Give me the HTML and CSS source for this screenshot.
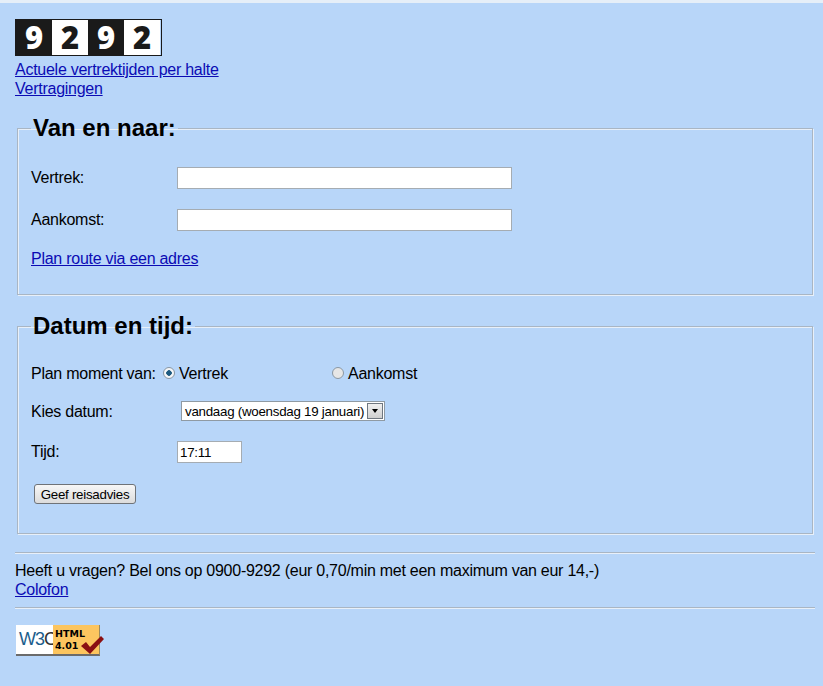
FILE: index.html
```html
<!DOCTYPE html>
<html lang="nl">
<head>
  <meta charset="UTF-8" />
  <title>9292 Reisadvies</title>
  <link rel="stylesheet" href="styles.css">
</head>
<body>
  <div id="logo">
    <span class="digit dark">9</span><span class="digit light">2</span><span class="digit dark">9</span><span class="digit light">2</span>
  </div>
  <a href="#">Actuele vertrektijden per halte</a><br>
  <a href="#">Vertragingen</a>

  <form>
    <fieldset class="first">
      <legend>Van en naar:</legend>
      <div class="row">
        <label for="from">Vertrek:</label>
        <input type="text" id="from" class="place">
      </div>
      <div class="row">
        <label for="to">Aankomst:</label>
        <input type="text" id="to" class="place">
      </div>
      <a href="#" class="via">Plan route via een adres</a>
    </fieldset>

    <fieldset class="second">
      <legend>Datum en tijd:</legend>
      <div class="row moment">
        <span class="moment-label">Plan moment van:</span>
        <label class="option first-option"><span class="radio checked"></span>Vertrek</label>
        <label class="option"><span class="radio"></span>Aankomst</label>
      </div>
      <div class="row date-row">
        <label>Kies datum:</label>
        <div class="select">
          <span class="select-text">vandaag (woensdag 19 januari)</span>
          <span class="select-btn"><span class="arrow"></span></span>
        </div>
      </div>
      <div class="row time-row">
        <label for="time">Tijd:</label>
        <input type="text" id="time" class="time" value="17:11">
      </div>
      <button type="button" class="btn">Geef reisadvies</button>
    </fieldset>
  </form>

  <hr class="rule-top">
  <div class="footer">
    Heeft u vragen? Bel ons op 0900-9292 (eur 0,70/min met een maximum van eur 14,-)<br>
    <a href="#">Colofon</a>
  </div>
  <hr class="rule-bottom">

  <div id="badge">
    <div class="badge-w3c"><span class="w3">W3</span><span class="c">C</span></div>
    <div class="badge-html">HTML<br>4.01</div>
    <svg class="check" width="24" height="20" viewBox="0 0 24 20">
      <path d="M1 11 L6 7 L10 12 L21 1 L24 4 L10 19 Z" fill="#8a0f12"/>
    </svg>
  </div>
</body>
</html>
```

FILE: styles.css
```css
html {
  background: #b8d6f9;
}

body {
  margin: 0;
  padding: 16px 8px 30px 15px;
  border-top: 3px solid #e6eff8;
  font-family: "Liberation Sans", Arial, sans-serif;
  font-size: 16px;
  letter-spacing: -0.26px;
  line-height: 19px;
  color: #000;
  min-height: 637px;
}

a {
  color: #0b0bb4;
}

#logo {
  display: flex;
  width: 147px;
  height: 37px;
  box-sizing: border-box;
  border: 1px solid #1a1a1a;
  margin-bottom: 4px;
  letter-spacing: 0;
}

.digit {
  width: 36px;
  height: 35px;
  text-align: center;
  font-family: "Open Sans", sans-serif;
  font-weight: 800;
  font-size: 31px;
  line-height: 35px;
}

.dark {
  background: #1a1a1a;
  color: #fff;
}

.light {
  background: #fff;
  color: #1a1a1a;
}

form {
  margin-top: 16px;
}

fieldset {
  margin: 0 2px;
  padding: 0 13px;
  border: 1px solid #a9b6c4;
  box-shadow: 1px 1px 0 #e8f0f9, inset 1px 1px 0 #e8f0f9;
  width: 796px;
  box-sizing: border-box;
}

legend {
  font-size: 24px;
  font-weight: bold;
  letter-spacing: 0;
  line-height: 28px;
  padding: 0 2px;
}

.first {
  height: 181px;
}

.second {
  height: 222px;
  margin-top: 17px;
}

.row {
  display: flex;
  align-items: center;
}

.row label {
  width: 146px;
}

.first .row {
  height: 22px;
  margin-top: 20px;
}

.first .row:first-of-type {
  margin-top: 25px;
}

.first .row label {
  margin-top: -2px;
}

.place {
  width: 335px;
  height: 22px;
  box-sizing: border-box;
  border: 1px solid #a5acb2;
  padding: 1px 3px;
  background: #fff;
}

.via {
  display: block;
  margin-top: 18px;
}

.moment {
  margin-top: 23px;
  height: 20px;
}

.moment-label {
  width: 132px;
}

.row .option {
  display: flex;
  align-items: center;
  width: auto;
}

.row .first-option {
  width: 169px;
}

.radio {
  width: 12px;
  height: 12px;
  box-sizing: border-box;
  border: 1px solid #8a97a3;
  border-radius: 50%;
  background: #e6e6e6;
  margin-right: 4px;
}

.checked {
  background: radial-gradient(circle, #1d5a80 0 2.5px, #f4f6f8 3px);
}

.date-row {
  margin-top: 18px;
  height: 20px;
}

.date-row label {
  width: 150px;
}

.select {
  display: flex;
  align-items: center;
  width: 204px;
  height: 20px;
  box-sizing: border-box;
  border: 1px solid #8f9aa3;
  background: #fff;
  font-size: 13.33px;
}

.select-text {
  flex: 1;
  padding-left: 3px;
  white-space: nowrap;
}

.select-btn {
  display: flex;
  align-items: center;
  justify-content: center;
  width: 16px;
  height: 16px;
  margin-right: 1px;
  border: 1px solid #6f7780;
  box-sizing: border-box;
  background: linear-gradient(#f0f0f0, #cfcfcf);
}

.arrow {
  width: 0;
  height: 0;
  border-left: 3px solid transparent;
  border-right: 3px solid transparent;
  border-top: 4px solid #000;
}

.time-row {
  margin-top: 20px;
  height: 22px;
}

.time-row label {
  margin-top: -2px;
}

.time {
  width: 65px;
  height: 22px;
  box-sizing: border-box;
  border: 1px solid #a5acb2;
  padding: 1px 2px;
  background: #fff;
  font-family: "Liberation Sans", Arial, sans-serif;
  font-size: 13.33px;
  letter-spacing: -0.26px;
}

.btn {
  display: block;
  margin: 21px 0 0 3px;
  width: 102px;
  height: 20px;
  padding: 0;
  border: 1px solid #6f7378;
  border-radius: 3px;
  background: linear-gradient(#f7f7f7, #dcdcdc);
  font-family: "Liberation Sans", Arial, sans-serif;
  font-size: 13.33px;
  letter-spacing: -0.26px;
  color: #000;
}

hr {
  margin: 0;
  border: 0;
  height: 1px;
  background: #a9b6c4;
  border-bottom: 1px solid #e8f0f9;
}

.rule-top {
  margin-top: 18px;
}

.footer {
  margin-top: 7px;
}

.rule-bottom {
  margin-top: 8px;
}

#badge {
  position: relative;
  display: flex;
  width: 83px;
  height: 29px;
  margin: 16px 0 0 1px;
  border-bottom: 2px solid #6b6b6b;
  border-right: 1px solid #9a8a60;
  letter-spacing: 0;
}

.badge-w3c {
  width: 37px;
  background: #fff;
  font-family: "Liberation Sans", sans-serif;
  font-size: 18px;
  letter-spacing: -1px;
  line-height: 29px;
  padding-left: 3px;
  box-sizing: border-box;
  white-space: nowrap;
}

.w3 {
  color: #1c5d8c;
}

.c {
  color: #333;
}

.badge-html {
  flex: 1;
  background: #fcc55f;
  font-family: "DejaVu Sans", sans-serif;
  font-weight: bold;
  font-size: 9.5px;
  line-height: 12px;
  padding: 3px 0 0 2px;
}

.check {
  position: absolute;
  right: -5px;
  bottom: -1px;
}
```
